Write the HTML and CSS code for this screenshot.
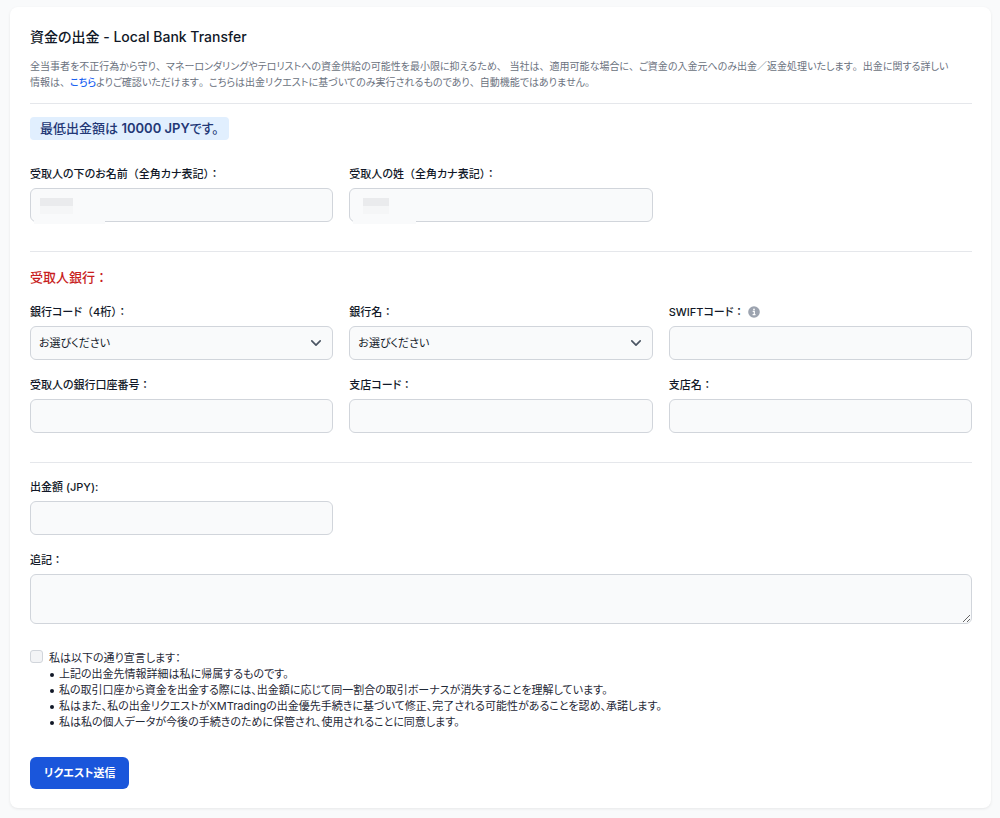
FILE: index.html
```
<!DOCTYPE html>
<html lang="ja">
<head>
<meta charset="utf-8">
<meta name="viewport" content="width=device-width, initial-scale=1">
<title>資金の出金</title>
<link rel="stylesheet" href="styles.css">
</head>
<body>
<main class="card">
  <header class="intro">
    <h1 class="title">資金の出金 - Local Bank Transfer</h1>
    <p class="lead">全当事者を不正行為から守り<span class="wide">、</span>マネーロンダリングやテロリストへの資金供給の可能性を最小限に抑えるため<span class="wide">、</span> 当社は<span class="wide">、</span>適用可能な場合に<span class="wide">、</span>ご資金の入金元へのみ出金<span class="wide">／</span>返金処理いたします<span class="wide">。</span>出金に関する詳しい<br>情報は<span class="wide">、</span><a class="link" href="#">こちら</a>よりご確認いただけます<span class="wide">。</span>こちらは出金リクエストに基づいてのみ実行されるものであり<span class="wide">、</span>自動機能ではありません。</p>
  </header>
  <form class="form">
    <section class="section section-first">
      <p class="badge">最低出金額は <strong>10000 JPY</strong>です。</p>
      <div class="grid">
        <div class="field">
          <label class="label" for="first">受取人の下のお名前<span class="wide">（</span>全角カナ表記<span class="wide">）：</span></label>
          <div class="control"><input class="input" id="first" type="text"><span class="mask"><span class="mask-bar"></span></span></div>
        </div>
        <div class="field">
          <label class="label" for="last">受取人の姓<span class="wide">（</span>全角カナ表記<span class="wide">）：</span></label>
          <div class="control"><input class="input" id="last" type="text"><span class="mask mask-short"><span class="mask-bar"></span></span></div>
        </div>
      </div>
    </section>
    <section class="section">
      <h2 class="subtitle">受取人銀行<span class="wide">：</span></h2>
      <div class="grid">
        <div class="field">
          <label class="label" for="code">銀行コード<span class="wide">（</span>4桁<span class="wide">）：</span></label>
          <div class="control"><select class="input select" id="code"><option>お選びください</option></select><svg class="chevron" viewBox="0 0 10 10" aria-hidden="true"><path d="M1.5 3.2 5 6.7 8.500 3.2"/></svg></div>
        </div>
        <div class="field">
          <label class="label" for="bank">銀行名<span class="wide">：</span></label>
          <div class="control"><select class="input select" id="bank"><option>お選びください</option></select><svg class="chevron" viewBox="0 0 10 10" aria-hidden="true"><path d="M1.5 3.2 5 6.7 8.500 3.2"/></svg></div>
        </div>
        <div class="field">
          <label class="label" for="swift">SWIFTコード<span class="wide">：</span><svg class="info" viewBox="0 0 12 12" aria-hidden="true"><circle cx="6" cy="6" r="5.800" fill="#9ca3af"/><circle cx="6" cy="3.400" r="0.900" fill="#fff"/><path d="M4.700 5.400H6.300V8.500M4.600 8.700H7.500" fill="none" stroke="#fff" stroke-width="1.200"/></svg></label>
          <input class="input" id="swift" type="text">
        </div>
        <div class="field">
          <label class="label" for="account">受取人の銀行口座番号<span class="wide">：</span></label>
          <input class="input" id="account" type="text">
        </div>
        <div class="field">
          <label class="label" for="branch-code">支店コード<span class="wide">：</span></label>
          <input class="input" id="branch-code" type="text">
        </div>
        <div class="field">
          <label class="label" for="branch">支店名<span class="wide">：</span></label>
          <input class="input" id="branch" type="text">
        </div>
      </div>
    </section>
    <section class="section section-last">
      <div class="grid">
        <div class="field">
          <label class="label" for="amount">出金額 (JPY):</label>
          <input class="input" id="amount" type="text">
        </div>
        <div class="field field-full">
          <label class="label" for="note">追記<span class="wide">：</span></label>
          <textarea class="input textarea" id="note"></textarea>
        </div>
      </div>
      <div class="consent">
        <input class="check" id="agree" type="checkbox">
        <div class="statement">
          <label for="agree">私は以下の通り宣言します：</label>
          <ul class="terms">
            <li>上記の出金先情報詳細は私に帰属するものです。</li>
            <li>私の取引口座から資金を出金する際には、出金額に応じて同一割合の取引ボーナスが消失することを理解しています。</li>
            <li>私はまた、私の出金リクエストがXMTradingの出金優先手続きに基づいて修正、完了される可能性があることを認め、承諾します。</li>
            <li>私は私の個人データが今後の手続きのために保管され、使用されることに同意します。</li>
          </ul>
        </div>
      </div>
      <button class="submit" type="submit">リクエスト送信</button>
    </section>
  </form>
</main>
</body>
</html>
```
FILE: styles.css
```
* {
  box-sizing: border-box;
}

body {
  margin: 0;
  padding: 7px 9px 9px 10px;
  background: #f9fafb;
  color: #111827;
  font-family: Inter, "Noto Sans CJK JP", sans-serif;
  font-size: 11px;
  line-height: 16px;
  font-feature-settings: "palt";
}

h1, h2, p, ul {
  margin: 0;
}

input, select, textarea, button {
  font: inherit;
  font-feature-settings: inherit;
  color: inherit;
}

.wide {
  font-feature-settings: "palt" 0;
}

.card {
  padding: 19px 19px 19px 20px;
  background: #fff;
  border-radius: 8px;
  box-shadow: 0 1px 3px rgba(0, 0, 0, 0.08);
}

.title {
  font-size: 14px;
  line-height: 22px;
  font-weight: 500;
}

.lead {
  margin-top: 10px;
  color: #6b7280;
  font-size: 10px;
}

.link {
  color: #1c64f2;
  font-weight: 500;
  text-decoration: none;
}

.section {
  padding: 16px 0 29px;
  border-top: 1px solid #e5e7eb;
}

.section-first {
  margin-top: 13px;
  padding-top: 13px;
}

.section-last {
  padding-bottom: 0;
}

.badge {
  width: fit-content;
  margin-bottom: 26px;
  padding: 0 10px;
  background: #e1effe;
  border-radius: 4px;
  color: #233876;
  font-size: 13px;
  line-height: 23px;
  font-weight: 500;
}

.badge strong {
  font-weight: 600;
}

.subtitle {
  margin-bottom: 18px;
  color: #c81e1e;
  font-size: 13px;
  line-height: 18px;
  font-weight: 500;
}

.grid {
  display: grid;
  grid-template-columns: repeat(3, 1fr);
  gap: 17px 16px;
}

.field {
  display: flex;
  flex-direction: column;
  gap: 6px;
}

.field-full {
  grid-column: 1 / -1;
}

.label {
  display: flex;
  align-items: center;
  white-space: pre;
  font-weight: 500;
}

.control {
  position: relative;
}

.input {
  display: block;
  width: 100%;
  height: 34px;
  padding: 0 8px;
  background: #f9fafb;
  border: 1px solid #d1d5db;
  border-radius: 6px;
}

.select {
  appearance: none;
}

.textarea {
  height: 50px;
  resize: vertical;
}

.chevron {
  position: absolute;
  top: 11px;
  right: 11px;
  width: 12px;
  height: 12px;
  fill: none;
  stroke: #4b5563;
  stroke-width: 1.400;
  stroke-linecap: round;
  stroke-linejoin: round;
  pointer-events: none;
}

.info {
  width: 12px;
  height: 12px;
  margin-left: 4px;
}

.mask {
  position: absolute;
  top: 10px;
  left: 4px;
  width: 71px;
  height: 26px;
  background: #f9fafb;
}

.mask-short {
  width: 63px;
}

.mask-bar {
  display: block;
  width: 33px;
  height: 16px;
  margin-left: 6px;
  background: linear-gradient(#eaebed 50%, #f5f6f7 50%);
}

.mask-short .mask-bar {
  width: 26px;
  margin-left: 10px;
}

.consent {
  display: flex;
  gap: 6px;
  margin-top: 25px;
}

.check {
  appearance: none;
  flex: none;
  width: 13px;
  height: 13px;
  margin: 1px 0 0;
  background: #f3f4f6;
  border: 1px solid #d1d5db;
  border-radius: 3px;
}

.statement {
  padding-top: 1px;
  color: #1f2937;
}

.terms {
  padding-left: 10px;
  list-style: none;
}

.terms li::before {
  content: "";
  float: left;
  width: 4px;
  height: 4px;
  margin: 7px 0 0 -9px;
  background: #111827;
  border-radius: 50%;
}

.submit {
  display: block;
  margin-top: 27px;
  padding: 0 14px;
  height: 32px;
  background: #1a56db;
  border: 0;
  border-radius: 6px;
  color: #fff;
  font-weight: 600;
}
```
